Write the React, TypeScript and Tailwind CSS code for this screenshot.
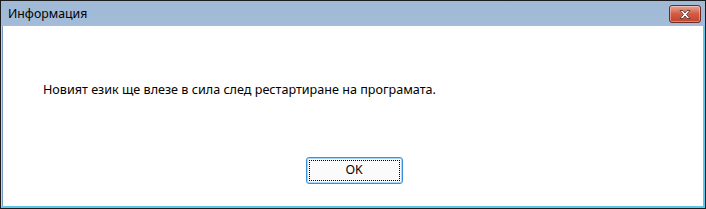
const font = { fontFamily: '"Segoe UI", "Noto Sans", "Liberation Sans", sans-serif' };

function CloseButton() {
  return (
    <div className="w-[32px] h-[18px] rounded-[3px] border border-[#6e2a24] bg-gradient-to-b from-[#e8a493] via-[#d25a43] to-[#c4432c] flex items-center justify-center shadow-[inset_0_0_0_1px_rgba(255,255,255,0.35)]">
      <svg width="14" height="11" viewBox="0 0 14 11">
        <path
          d="M2 1.5 L5 1.5 L7 4 L9 1.5 L12 1.5 L8.6 5.5 L12 9.5 L9 9.5 L7 7 L5 9.5 L2 9.5 L5.4 5.5 Z"
          fill="#ffffff"
          stroke="#5a3a36"
          strokeWidth="0.9"
          strokeLinejoin="round"
        />
      </svg>
    </div>
  );
}

export default function App() {
  return (
    <div className="w-[706px] h-[209px] bg-[#1c1c1c] p-px" style={font}>
      <div className="w-full h-full flex flex-col bg-gradient-to-b from-[#9fb9d6] to-[#bad2ea]">
        {/* Title bar */}
        <div className="h-[25px] flex items-center justify-between pl-[7px] pr-[4px] pt-[1px]">
          <span className="text-[12.3px] text-black leading-none">Информация</span>
          <CloseButton />
        </div>

        {/* Client */}
        <div className="flex-1 flex border-l border-[#c2d7ec] border-r-2 border-r-[#5fc6ec] border-b-2 border-b-[#5fc6ec]">
          <div className="flex-1 bg-white border-l border-[#7a98bb] flex flex-col">
            <div className="h-[72px] flex items-end pl-[40px]">
              <span className="text-[12.6px] text-black leading-none pb-[1px]">
                Новият език ще влезе в сила след рестартиране на програмата.
              </span>
            </div>
            <div className="flex justify-center pt-[59px] pl-[2px]">
              <button className="w-[97px] h-[27px] rounded-[3px] border border-[#3c8fdc] bg-[#fbfbfb] p-[2px] shadow-[inset_0_0_0_1px_#a9d6f7]">
                <div className="w-full h-full border border-dotted border-black flex items-center justify-center text-[12.3px] text-black">
                  OK
                </div>
              </button>
            </div>
          </div>
        </div>
      </div>
    </div>
  );
}
